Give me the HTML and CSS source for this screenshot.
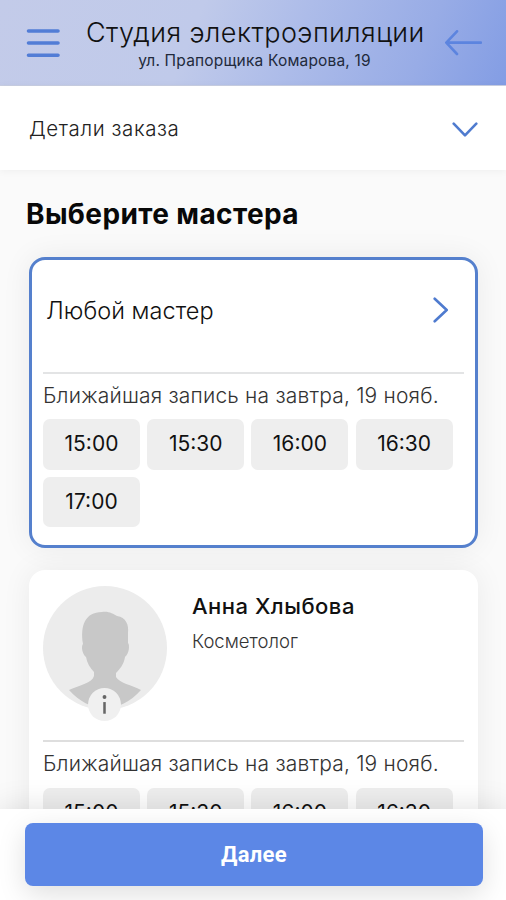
FILE: index.html
```
<!DOCTYPE html>
<html lang="ru">
<head>
<meta charset="utf-8">
<title>Выберите мастера</title>
<link rel="stylesheet" href="styles.css">
</head>
<body>
<div class="app">
  <header class="topbar">
    <svg class="menu-icon" viewBox="0 0 34 30"><path d="M2.5 3H32M2.5 15H32M2.5 27.3H32"/></svg>
    <div class="salon">
      <div class="salon-name">Студия электроэпиляции</div>
      <div class="salon-address">ул. Прапорщика Комарова, 19</div>
    </div>
    <svg class="back-icon" viewBox="0 0 38 26"><path d="M37 12.6H2.5M13 1.3L2.3 12.6L13 24"/></svg>
  </header>
  <section class="details">
    <span>Детали заказа</span>
    <svg class="chevron-down" viewBox="0 0 26 16"><path d="M1.7 1.7L13 13.3L24.3 1.7"/></svg>
  </section>
  <main class="content">
    <h1>Выберите мастера</h1>
    <article class="card card-selected">
      <div class="any-master">
        <span>Любой мастер</span>
        <svg class="chevron-right" viewBox="0 0 16 26"><path d="M1.7 1.7L13.7 13L1.7 24.3"/></svg>
      </div>
      <div class="nearest">Ближайшая запись на завтра, 19 нояб.</div>
      <div class="slots">
        <span class="slot">15:00</span><span class="slot">15:30</span><span class="slot">16:00</span><span class="slot">16:30</span><span class="slot">17:00</span>
      </div>
    </article>
    <article class="card">
      <div class="master">
        <div class="avatar">
          <svg viewBox="0 0 124 124">
            <defs><clipPath id="round"><circle cx="62" cy="62" r="62"/></clipPath></defs>
            <circle cx="62" cy="62" r="62" fill="#ececec"/>
            <path clip-path="url(#round)" fill="#c8c8c8" d="M59 26C66 25 70 28 74 30C83 31 86 39 85 47L85 57C87 59 86 68 82 71C81 78 77 83 73 87L73 91C76 97 89 99 98 104C87 116 75 122 62 122C48 122 36 115 26 104C37 99 49 97 51 90L51 86C47 82 44 77 43 71C39 68 38 60 40 58C37 40 42 26 59 26Z"/>
          </svg>
          <span class="info"><svg viewBox="0 0 34 34"><circle cx="17" cy="9.3" r="2"/><path d="M15.7 14.5h2.6v12h-2.6z"/></svg></span>
        </div>
        <div class="master-text">
          <div class="master-name">Анна Хлыбова</div>
          <div class="master-role">Косметолог</div>
        </div>
      </div>
      <div class="nearest">Ближайшая запись на завтра, 19 нояб.</div>
      <div class="slots">
        <span class="slot">15:00</span><span class="slot">15:30</span><span class="slot">16:00</span><span class="slot">16:30</span>
      </div>
    </article>
  </main>
  <footer class="bottom"><button class="next">Далее</button></footer>
</div>
</body>
</html>
```
FILE: styles.css
```
* { box-sizing: border-box; }
body { margin: 0; font-family: Inter, "Liberation Sans", sans-serif; color: #111; }
svg { display: block; flex: none; }
.app { height: 900px; display: flex; flex-direction: column; overflow: hidden; background: #fafafa; }
.topbar {
  flex: none; height: 86px; display: flex; padding: 0 24px 0 26px;
  background: linear-gradient(112deg, #c3cbe9 0%, #c0caea 38%, #adbce9 58%, #98ace6 82%, #839de4 100%);
  border-bottom: 1px solid #c9cfe2;
}
.menu-icon, .back-icon, .chevron-down, .chevron-right { fill: none; stroke: #4f7bcf; stroke-width: 2.6; stroke-linecap: round; stroke-linejoin: round; }
.menu-icon { width: 34px; height: 30px; margin-top: 28px; stroke: #527dd6; stroke-width: 3.6; }
.back-icon { width: 38px; height: 26px; margin: 30px 0 0 21px; stroke: #5c84df; }
.salon { width: 337px; margin-left: 26px; overflow: hidden; white-space: nowrap; }
.salon-name { margin-top: 16px; font-size: 27px; line-height: 34px; letter-spacing: .45px; font-weight: 350; }
.salon-address { margin-top: 1px; text-align: center; font-size: 15.5px; line-height: 20px; letter-spacing: .18px; font-weight: 380; color: #222a3c; }
.details {
  flex: none; height: 84px; padding: 0 28px 0 29px; display: flex; align-items: center; justify-content: space-between;
  background: #fff; font-size: 20.5px; letter-spacing: .6px; font-weight: 350; box-shadow: 0 1px 8px rgba(0,0,0,.05); color: #222;
}
.chevron-down { width: 26px; height: 16px; margin-top: 4px; }
.content { flex: 1; min-height: 0; padding: 25px 28px 0 29px; }
h1 { margin: 0 0 23px -3px; font-size: 28px; line-height: 39px; letter-spacing: .38px; font-weight: 650; color: #080808; }
.card { width: 449px; height: 291px; margin-bottom: 22px; padding: 0 14px; border-radius: 16px; background: #fff; box-shadow: 0 0 30px rgba(0,0,0,.065); }
.card-selected { padding: 0 11px; border: 3px solid #5580cd; }
.any-master { height: 114px; display: flex; justify-content: space-between; padding: 37px 15px 0 3px; border-bottom: 2px solid #e3e4e5; font-size: 23.5px; line-height: 27px; letter-spacing: .05px; font-weight: 330; }
.chevron-right { width: 16px; height: 26px; }
.nearest { padding-top: 9px; height: 45px; font-size: 21px; line-height: 26px; letter-spacing: .19px; font-weight: 300; white-space: nowrap; color: #333; }
.slots { display: grid; grid-template-columns: repeat(4, 97px); column-gap: 7.2px; row-gap: 7px; }
.slot { height: 50.5px; border-radius: 7px; background: #eee; text-align: center; font-size: 21px; line-height: 50px; font-weight: 400; }
.master { height: 172px; display: flex; padding-top: 16px; border-bottom: 2px solid #dedede; }
.card:not(.card-selected) .nearest { height: 46px; }
.avatar { position: relative; width: 124px; height: 124px; }
.avatar > svg { width: 124px; height: 124px; }
.info { position: absolute; left: 45px; top: 102px; width: 33px; height: 33px; border-radius: 50%; background: #f0f0f0; }
.info svg { width: 33px; height: 33px; fill: #666; }
.master-text { margin-left: 25px; padding-top: 6px; }
.master-name { font-size: 22px; line-height: 28px; letter-spacing: .5px; font-weight: 550; }
.master-role { margin-top: 9px; font-size: 18.5px; line-height: 24px; font-weight: 320; color: #333; }
.bottom { position: relative; flex: none; height: 91px; padding: 14px 23px 0 25px; background: #fff; overflow: visible; box-shadow: 0 0 32px rgba(0,0,0,.13); }
.next { display: block; width: 458px; height: 63px; border: 0; border-radius: 8px; background: #5c87e6; color: #fff; font: 700 22px Roboto, sans-serif; letter-spacing: .35px; box-shadow: 0 8px 28px rgba(0,0,0,.13); clip-path: inset(-14px -25px -20px -25px); }
```
